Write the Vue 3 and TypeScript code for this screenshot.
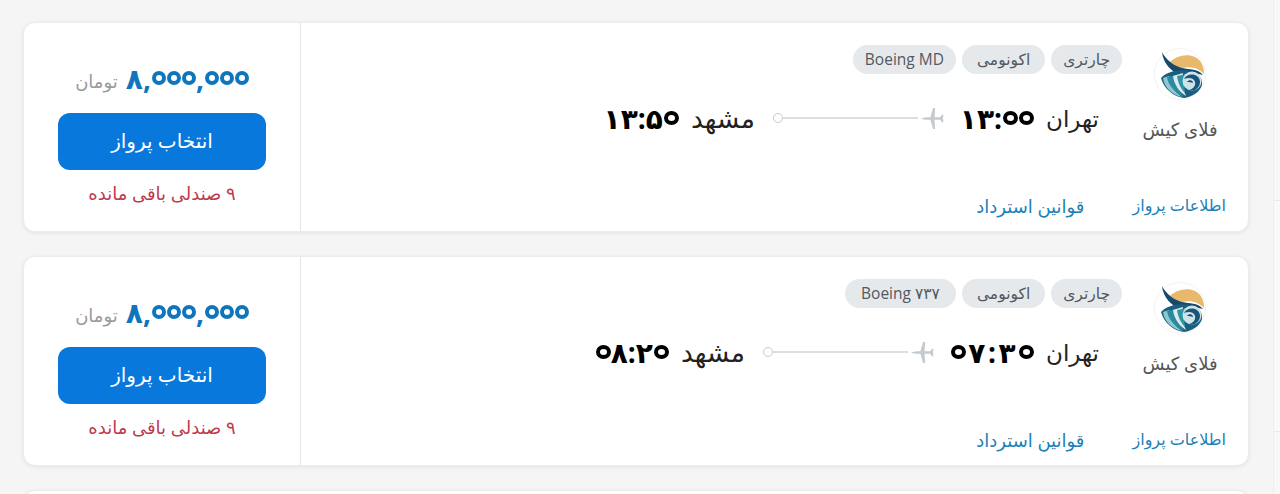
<script setup lang="ts">
interface Flight {
  model: string
  depart: string
  arrive: string
  wide: boolean
}
const flights: Flight[] = [
  { model: 'Boeing MD', depart: '۱۳:۰۰', arrive: '۱۳:۵۰', wide: false },
  { model: 'Boeing ۷۳۷', depart: '۰۷:۳۰', arrive: '۰۸:۲۰', wide: true },
]
const chars = (s: string): string[] => Array.from(s)
</script>

<template>
  <div class="page">
    <div class="side-panel">
      <div class="side-row" />
    </div>
    <article v-for="(f, i) in flights" :key="i" class="card">
      <div class="main">
        <div class="top">
          <div class="airline">
            <svg class="logo" viewBox="0 0 52 52" aria-hidden="true">
              <circle cx="26" cy="26" r="25.5" fill="#fff" stroke="#f2f2f2" />
              <path d="M15 15C21 8 33 5 41 9C47 12 50 18 50 26C42 18 34 19 28 20C23 19 18 18 15 15Z" fill="#e8b96c" />
              <path d="M8 4C12 12 20 18 28 20C36 22 43 20 49 27C40 24 34 27 27 27C17 24 9 15 8 4Z" fill="#17486d" />
              <path d="M7 30C13 23 26 21 36 23C44 24 49 30 48 37C46 44 38 49 30 50C20 49 10 41 7 30Z" fill="#1b5f80" />
              <path d="M9 30C10 39 18 47 28 49C21 44 15 37 15 28Z" fill="#8cc8ce" />
              <path d="M13 29C14 37 21 45 30 49C25 42 21 35 22 27Z" fill="#2a8ba0" />
              <path d="M19 28C20 36 25 44 32 48C29 41 27 33 29 25Z" fill="#dfeaed" />
              <path d="M23 28C24 35 27 41 31 45C30 38 30 32 33 26Z" fill="#2f95a6" />
              <circle cx="38" cy="33" r="9.5" fill="#cfe2e7" />
              <path d="M30 31C33 24 46 25 46 34C46 40 40 44 35 42C39 41 42 38 41 34C40 30 35 29 30 31Z" fill="#17567a" />
              <path d="M33 34C35 31 39 32 39 35C37 34 35 34 33 34Z" fill="#17486d" />
            </svg>
            <span class="airline-name">فلای کیش</span>
          </div>
          <div class="details">
            <div class="tags">
              <span class="tag">چارتری</span>
              <span class="tag tag-eco">اکونومی</span>
              <span class="tag" :class="{ 'tag-wide': f.wide }">{{ f.model }}</span>
            </div>
            <div class="route">
              <span class="city">تهران</span>
              <strong class="time" :class="{ 'time-wide': f.wide }"><span v-for="(c, k) in chars(f.depart)" :key="k" :class="{ zero: c === '۰' }">{{ c }}</span></strong>
              <svg class="plane" viewBox="0 0 24 24" aria-hidden="true">
                <path d="M1 12Q3 10.8 7 10.7H10L12.5 2H14.5L14 10.7H19.5L21 8.5H22.5L22 12L22.5 15.5H21L19.5 13.3H14L14.5 22H12.5L10 13.3H7Q3 13.2 1 12Z" fill="#c4cacd" />
              </svg>
              <span class="line" />
              <span class="dot" />
              <span class="city city-to">مشهد</span>
              <strong class="time"><span v-for="(c, k) in chars(f.arrive)" :key="k" :class="{ zero: c === '۰' }">{{ c }}</span></strong>
            </div>
          </div>
        </div>
        <div class="links">
          <a class="link">اطلاعات پرواز</a>
          <a class="link">قوانین استرداد</a>
        </div>
      </div>
      <aside class="buy">
        <div class="price">
          <strong class="amount"><span v-for="(c, k) in chars('۸,۰۰۰,۰۰۰')" :key="k" :class="{ zero: c === '۰' }">{{ c }}</span></strong>
          <span class="unit">تومان</span>
        </div>
        <button class="select" type="button">انتخاب پرواز</button>
        <span class="seats">۹ صندلی باقی مانده</span>
      </aside>
    </article>
    <article class="card card-cut" />
  </div>
</template>

<style>
html, body { margin: 0; background: #f5f5f5; overflow: hidden; }
</style>

<style scoped>
.page {
  position: relative;
  height: 494px;
  box-sizing: border-box;
  padding: 22px 31px 0 23px;
  display: flex;
  flex-direction: column;
  gap: 24px;
  overflow: hidden;
  font-family: "Open Sans", "DejaVu Sans", sans-serif;
}
.side-panel {
  position: absolute;
  left: 1273px;
  top: 0;
  bottom: 0;
  width: 7px;
  border-left: 1px solid #eeeeee;
  background: #f7f7f7;
  padding-top: 200px;
  box-sizing: border-box;
}
.side-row {
  height: 232px;
  box-sizing: border-box;
  border-top: 1px solid #ebebeb;
  border-bottom: 1px solid #ebebeb;
  background: #f9f9f9;
}
.card {
  direction: rtl;
  flex: 0 0 auto;
  height: 210px;
  display: flex;
  background: #fff;
  border-radius: 12px;
  border: 1px solid #ececec;
  box-sizing: border-box;
  box-shadow: 0 1px 4px rgba(0, 0, 0, 0.08);
  overflow: hidden;
}
.card-cut { height: 60px; }
.main {
  flex: 1;
  min-width: 0;
  display: flex;
  flex-direction: column;
  justify-content: space-between;
  padding: 22px 22px 13px 0;
}
.top { display: flex; gap: 16px; padding-right: 4px; }
.airline {
  width: 84px;
  display: flex;
  flex-direction: column;
  align-items: center;
  gap: 17px;
  padding-top: 3px;
}
.logo { width: 52px; height: 52px; }
.airline-name { font-size: 18px; color: #555; white-space: nowrap; }
.details { display: flex; flex-direction: column; gap: 27px; }
.tags { display: flex; gap: 6px; }
.tag {
  height: 29px;
  line-height: 28px;
  padding: 0 12px;
  border-radius: 15px;
  background: #e6e9ec;
  color: #53585e;
  font-size: 15.5px;
  white-space: nowrap;
}
.tag-eco { padding: 0 15px; }
.tag-wide { padding: 0 16px; }
.route { display: flex; align-items: center; height: 34px; padding-right: 23px; }
.city { font-size: 23px; color: #222; white-space: nowrap; }
.city-to { font-size: 26.5px; }
.time {
  direction: ltr;
  unicode-bidi: isolate;
  display: inline-flex;
  align-items: center;
  font-size: 28px;
  font-weight: 700;
  color: #000;
  margin-right: 12px;
  white-space: nowrap;
  line-height: 30px;
}
.time-wide { gap: 2.5px; }
.zero {
  display: inline-block;
  position: relative;
  flex: none;
  width: 16px;
  color: transparent;
  font-size: 12px;
  text-align: center;
}
.zero::after {
  content: "";
  position: absolute;
  left: 1px;
  top: 50%;
  margin-top: -7px;
  width: 15px;
  height: 14px;
  box-sizing: border-box;
  border: 4px solid #000;
  border-radius: 50%;
}
.plane { width: 25px; height: 25px; margin-right: 15px; flex: none; }
.line { width: 135px; height: 2px; background: #dcdfe1; margin-right: 2px; flex: none; }
.dot {
  width: 10px;
  height: 10px;
  box-sizing: border-box;
  border: 1px solid #c9c9c9;
  border-radius: 50%;
  flex: none;
  margin-left: 18px;
}
.links { display: flex; gap: 48px; }
.link { color: #1c7fb8; font-size: 16px; white-space: nowrap; }
.link + .link { font-size: 18px; }
.buy {
  flex: 0 0 277px;
  box-sizing: border-box;
  border-right: 1px solid #e5e5e5;
  display: flex;
  flex-direction: column;
  align-items: center;
  padding: 40px 0 0;
}
.price { display: flex; align-items: center; gap: 8px; height: 30px; }
.amount {
  direction: ltr;
  unicode-bidi: isolate;
  display: inline-flex;
  align-items: center;
  color: #0f75bc;
  font-size: 28px;
  font-weight: 700;
  white-space: nowrap;
}
.amount .zero { width: 15px; }
.amount .zero::after { width: 14px; border-color: #0f75bc; }
.unit { color: #9a9a9a; font-size: 18px; padding-top: 5px; }
.select {
  width: 208px;
  height: 57px;
  margin-top: 20px;
  padding-bottom: 4px;
  border: 0;
  border-radius: 12px;
  background: #0878dc;
  color: #fff;
  font-family: inherit;
  font-size: 20px;
}
.seats { margin-top: 11px; color: #c0394d; font-size: 18px; white-space: nowrap; }
</style>
